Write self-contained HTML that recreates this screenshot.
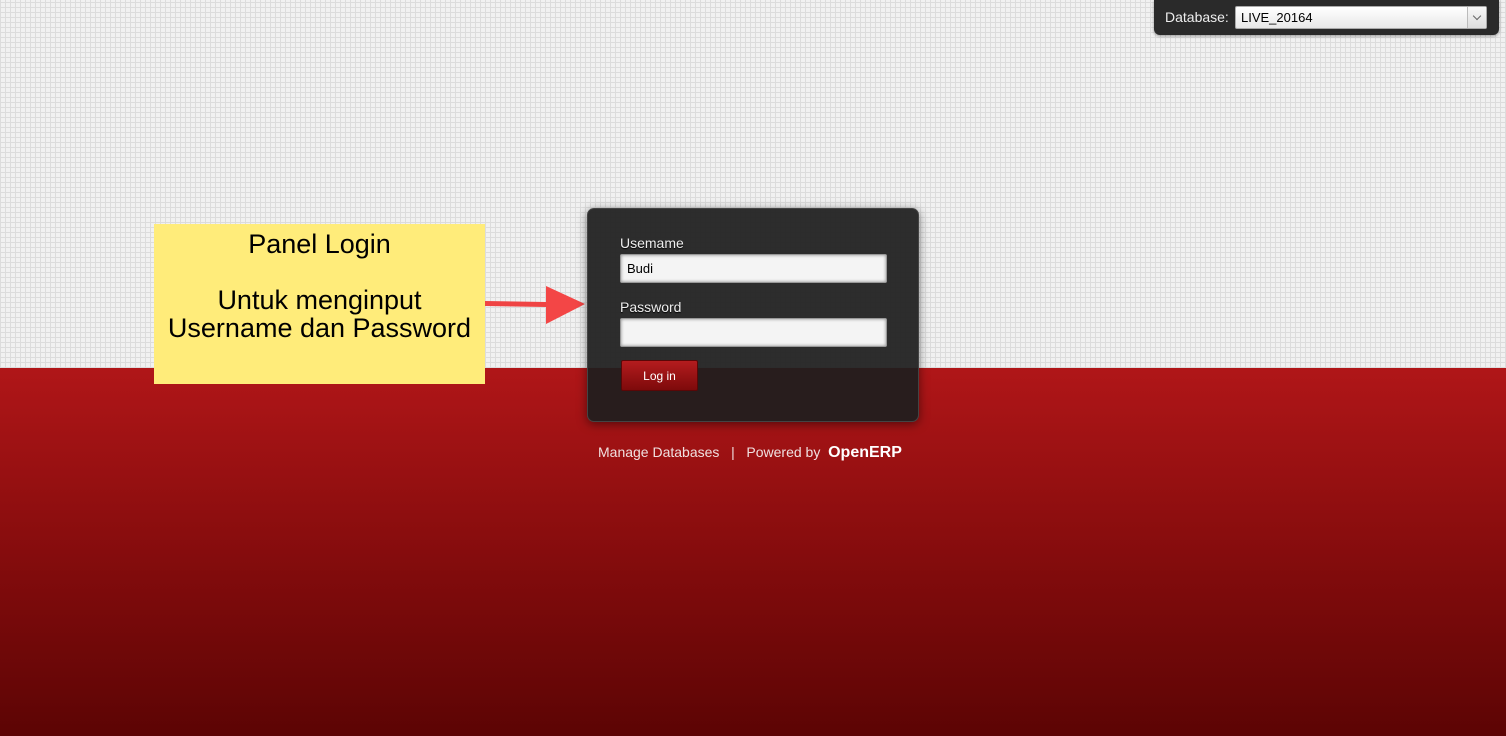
<!DOCTYPE html>
<html><head><meta charset="utf-8"><style>
*{margin:0;padding:0;box-sizing:border-box}
body{width:1506px;height:736px;overflow:hidden;position:relative;font-family:"Liberation Sans",Arial,sans-serif;
background:#f0f0f0}
.top{position:absolute;left:0;top:0;width:1506px;height:368px;background-color:#f1f1f1;
background-image:repeating-linear-gradient(0deg,#dcdcdc 0 1px,transparent 1px 5px),repeating-linear-gradient(90deg,#dcdcdc 0 1px,transparent 1px 5px)}
.bot{position:absolute;left:0;top:368px;width:1506px;height:368px;background:linear-gradient(#b01618,#8a0d0e 45%,#5c0404)}
.db{position:absolute;left:1154px;top:0;width:345px;height:35px;background:#2a2a2a;border-radius:0 0 6px 6px;box-shadow:0 1px 3px rgba(0,0,0,.4)}
.db span{position:absolute;left:11px;top:9px;color:#eee;font-size:14px}
.sel{position:absolute;left:81px;top:6px;width:252px;height:23px;background:linear-gradient(#fff,#e8e8e8);border:1px solid #aaa;border-radius:2px;font-size:13px;padding:3px 5px;color:#000}
.sel i{position:absolute;right:0;top:0;width:19px;height:21px;border-left:1px solid #bbb;background:linear-gradient(#f8f8f8,#ddd)}
.sel i:after{content:"";position:absolute;left:6px;top:6px;width:5px;height:5px;border-right:1px solid #666;border-bottom:1px solid #666;transform:rotate(45deg)}
.panel{position:absolute;left:587px;top:208px;width:332px;height:214px;border-radius:7px;background:rgba(30,30,30,.93);box-shadow:0 2px 10px rgba(0,0,0,.5);border:1px solid #444}
.panel label{position:absolute;left:32px;color:#eee;font-size:14px;text-shadow:0 1px 1px #000}
.inp{position:absolute;left:32px;width:267px;height:29px;background:#f4f4f4;border:1px solid #999;border-radius:2px;box-shadow:inset 0 0 3px #888;font-size:13px;padding:6px 6px;color:#000}
.btn{position:absolute;left:33px;top:151px;width:77px;height:31px;background:linear-gradient(#b41c1e,#7d0a0b);border:1px solid #5a0707;border-radius:2px;color:#fff;font-size:12px;text-align:center;line-height:30px}
.foot{position:absolute;left:598px;top:444px;color:#f0e0e0;font-size:14px;white-space:nowrap}
.foot b{font-size:16px;color:#fff}
.note{position:absolute;left:154px;top:224px;width:331px;height:160px;background:#ffec7a;text-align:center;font-size:27px;color:#000;line-height:28px;padding-top:6px}
</style></head><body>
<div class="top"></div><div class="bot"></div>
<div class="db"><span>Database:</span><div class="sel">LIVE_20164<i></i></div></div>
<div class="note">Panel Login<br><br>Untuk menginput<br>Username dan Password</div>
<svg style="position:absolute;left:484px;top:284px" width="104" height="42"><path d="M1 17 L62 18 L62 23 L1 22 Z" fill="#ef4444"/><path d="M62 2 L101 20 L62 40 Z" fill="#f34646"/></svg>
<div class="panel">
<label style="top:26px">Usemame</label>
<div class="inp" style="top:45px">Budi</div>
<label style="top:90px">Password</label>
<div class="inp" style="top:109px"></div>
<div class="btn">Log in</div>
</div>
<div class="foot">Manage Databases &nbsp;&nbsp;| &nbsp;&nbsp;Powered by &nbsp;<b>OpenERP</b></div>
</body></html>
